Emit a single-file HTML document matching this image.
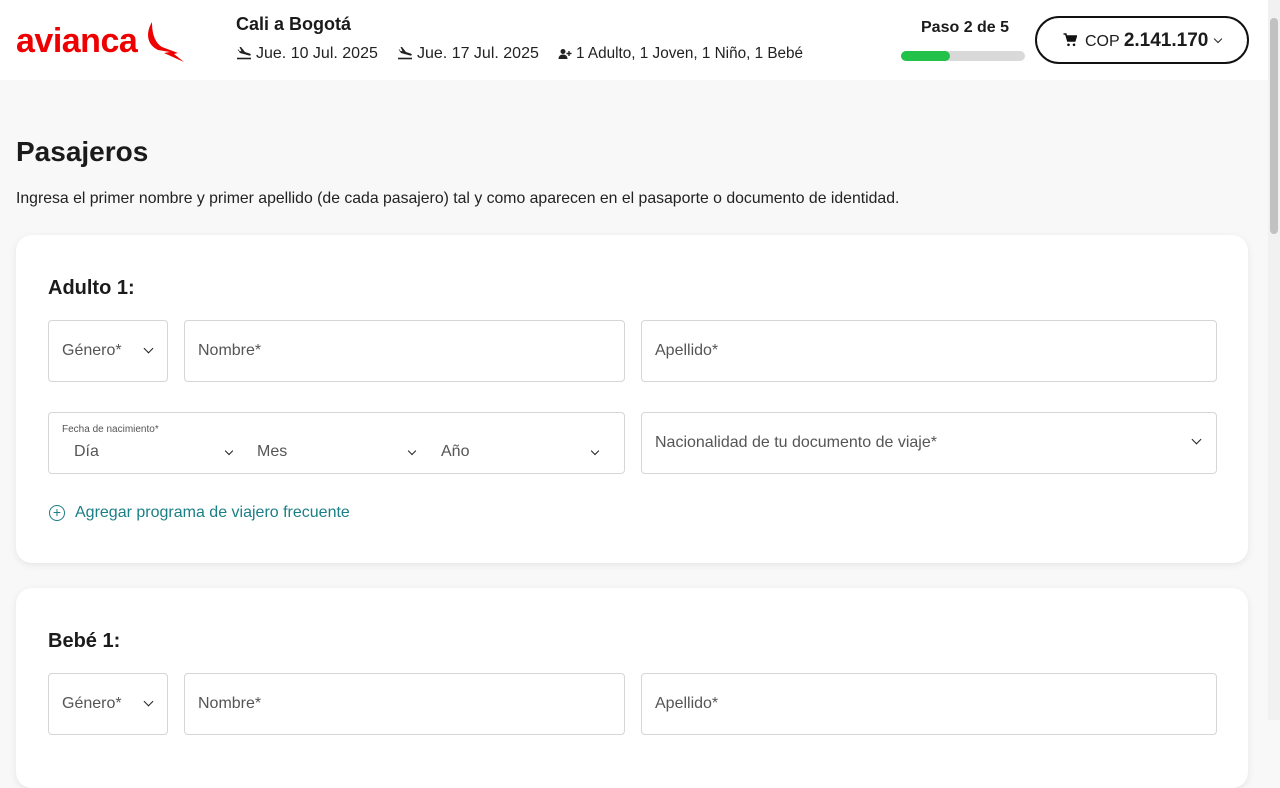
<!DOCTYPE html>
<html><head><meta charset="utf-8"><style>
*{box-sizing:border-box;margin:0;padding:0}
body{width:1280px;height:720px;overflow:hidden;background:#f8f8f8;font-family:"Liberation Sans",sans-serif;color:#1b1b1b;position:relative}
.hdr{position:absolute;left:0;top:0;width:1268px;height:80px;background:#fff}
.sb{position:absolute;right:0;top:0;width:12px;height:720px;background:#f1f1f1}
.sb div{position:absolute;left:2px;top:18px;width:8px;height:216px;background:#c1c1c1;border-radius:4px}
.abs{position:absolute}
.card{position:absolute;left:16px;width:1232px;background:#fff;border-radius:16px;box-shadow:0 2px 8px rgba(0,0,0,.08)}
.f{position:absolute;border:1px solid #d6d6d6;border-radius:4px;background:#fff;font-size:16px;color:#555}
.f span{position:absolute;left:13px;top:50%;transform:translateY(-50%)}
.chev{position:absolute;width:7px;height:7px;border-right:1.6px solid #222;border-bottom:1.6px solid #222;transform:rotate(45deg)}
</style></head><body>
<div class="hdr">
 <div class="abs" style="left:16px;top:22px;font-size:34px;font-weight:bold;color:#ee0000;letter-spacing:-0.5px;transform:scaleX(1.0);transform-origin:left">avianca</div>
 <svg class="abs" style="left:144px;top:22px" width="42" height="42" viewBox="0 0 42 42"><path d="M8 0 C2 10 2 22 14 28 L26 30 L20 31 L40 40 L30 32 L34 31 L18 25 C10 20 8 10 8 0Z" fill="#ee0000"/></svg>
 <div class="abs" style="left:236px;top:14px;font-size:18px;font-weight:bold">Cali a Bogotá</div>
 <svg class="abs" style="left:236px;top:46px" width="16" height="14" viewBox="0 0 16 14"><path d="M1 12.5h14" stroke="#222" stroke-width="1.6"/><path d="M2 4l2 3 9 2.5c1 .3 2-.2 1.8-1S13 7.3 12 7L9 6 5 1H3.5l2 4.2L3.5 5 2.5 3.5H1.5z" fill="#222"/></svg>
 <div class="abs" style="left:256px;top:45px;font-size:16px;color:#222">Jue. 10 Jul. 2025</div>
 <svg class="abs" style="left:397px;top:46px" width="16" height="14" viewBox="0 0 16 14"><path d="M1 12.5h14" stroke="#222" stroke-width="1.6"/><path d="M2 4l2 3 9 2.5c1 .3 2-.2 1.8-1S13 7.3 12 7L9 6 5 1H3.5l2 4.2L3.5 5 2.5 3.5H1.5z" fill="#222"/></svg>
 <div class="abs" style="left:417px;top:45px;font-size:16px;color:#222">Jue. 17 Jul. 2025</div>
 <svg class="abs" style="left:558px;top:48px" width="14" height="12" viewBox="0 0 14 12"><circle cx="5" cy="3.5" r="2.5" fill="#222"/><path d="M0.5 11c0-3 2-4.5 4.5-4.5S9.5 8 9.5 11z" fill="#222"/><path d="M11 3v5M8.5 5.5h5" stroke="#222" stroke-width="1.4"/></svg>
 <div class="abs" style="left:576px;top:45px;font-size:15.3px;color:#222">1 Adulto, 1 Joven, 1 Niño, 1 Bebé</div>
 <div class="abs" style="left:921px;top:19px;font-size:16px;font-weight:bold">Paso 2 de 5</div>
 <div class="abs" style="left:901px;top:51px;width:124px;height:10px;border-radius:5px;background:#d9d9d9"><div style="width:49px;height:10px;border-radius:5px;background:#22c24a"></div></div>
 <div class="abs" style="left:1035px;top:16px;width:214px;height:48px;border:2px solid #111;border-radius:24px">
  <svg class="abs" style="left:26px;top:15px" width="14" height="14" viewBox="0 0 14 14"><path d="M0.5 1h2.3l2 7h7l1.5-5H4" fill="none" stroke="#111" stroke-width="1.6"/><path d="M4 3h9l-1.4 5H5z" fill="#111"/><circle cx="5.5" cy="11.8" r="1.3" fill="#111"/><circle cx="11" cy="11.8" r="1.3" fill="#111"/></svg>
  <div class="abs" style="left:48px;top:12px;font-size:16px;white-space:nowrap">COP <b style="font-size:19px">2.141.170</b></div>
  <div class="chev" style="left:178px;top:18px;width:6px;height:6px"></div>
 </div>
</div>
<div class="sb"><div></div></div>
<div class="abs" style="left:16px;top:136px;font-size:28px;font-weight:bold;color:#1b1b1b">Pasajeros</div>
<div class="abs" style="left:16px;top:190px;font-size:15.8px;color:#222">Ingresa el primer nombre y primer apellido (de cada pasajero) tal y como aparecen en el pasaporte o documento de identidad.</div>
<div class="card" style="top:235px;height:328px">
 <div class="abs" style="left:32px;top:42px;font-size:20px;font-weight:bold">Adulto 1:</div>
 <div class="f" style="left:32px;top:85px;width:120px;height:62px"><span>Género*</span><div class="chev" style="left:96px;top:24px"></div></div>
 <div class="f" style="left:168px;top:85px;width:441px;height:62px"><span>Nombre*</span></div>
 <div class="f" style="left:625px;top:85px;width:576px;height:62px"><span>Apellido*</span></div>
 <div class="f" style="left:32px;top:177px;width:577px;height:62px">
  <div class="abs" style="left:13px;top:11px;font-size:10px;color:#555">Fecha de nacimiento*</div>
  <div class="abs" style="left:25px;top:30px">Día</div><div class="chev" style="left:177px;top:35px;width:6px;height:6px"></div>
  <div class="abs" style="left:208px;top:30px">Mes</div><div class="chev" style="left:360px;top:35px;width:6px;height:6px"></div>
  <div class="abs" style="left:392px;top:30px">Año</div><div class="chev" style="left:543px;top:35px;width:6px;height:6px"></div>
 </div>
 <div class="f" style="left:625px;top:177px;width:576px;height:62px"><span>Nacionalidad de tu documento de viaje*</span><div class="chev" style="left:551px;top:23px"></div></div>
 <div class="abs" style="left:33px;top:270px;width:16px;height:16px;border:1.5px solid #1a7f86;border-radius:50%;color:#1a7f86;font-size:14px;line-height:12px;text-align:center">+</div>
 <div class="abs" style="left:59px;top:269px;font-size:16px;color:#1a7f86">Agregar programa de viajero frecuente</div>
</div>
<div class="card" style="top:588px;height:200px">
 <div class="abs" style="left:32px;top:42px;font-size:20px;font-weight:bold">Bebé 1:</div>
 <div class="f" style="left:32px;top:85px;width:120px;height:62px"><span>Género*</span><div class="chev" style="left:96px;top:24px"></div></div>
 <div class="f" style="left:168px;top:85px;width:441px;height:62px"><span>Nombre*</span></div>
 <div class="f" style="left:625px;top:85px;width:576px;height:62px"><span>Apellido*</span></div>
</div>
</body></html>
